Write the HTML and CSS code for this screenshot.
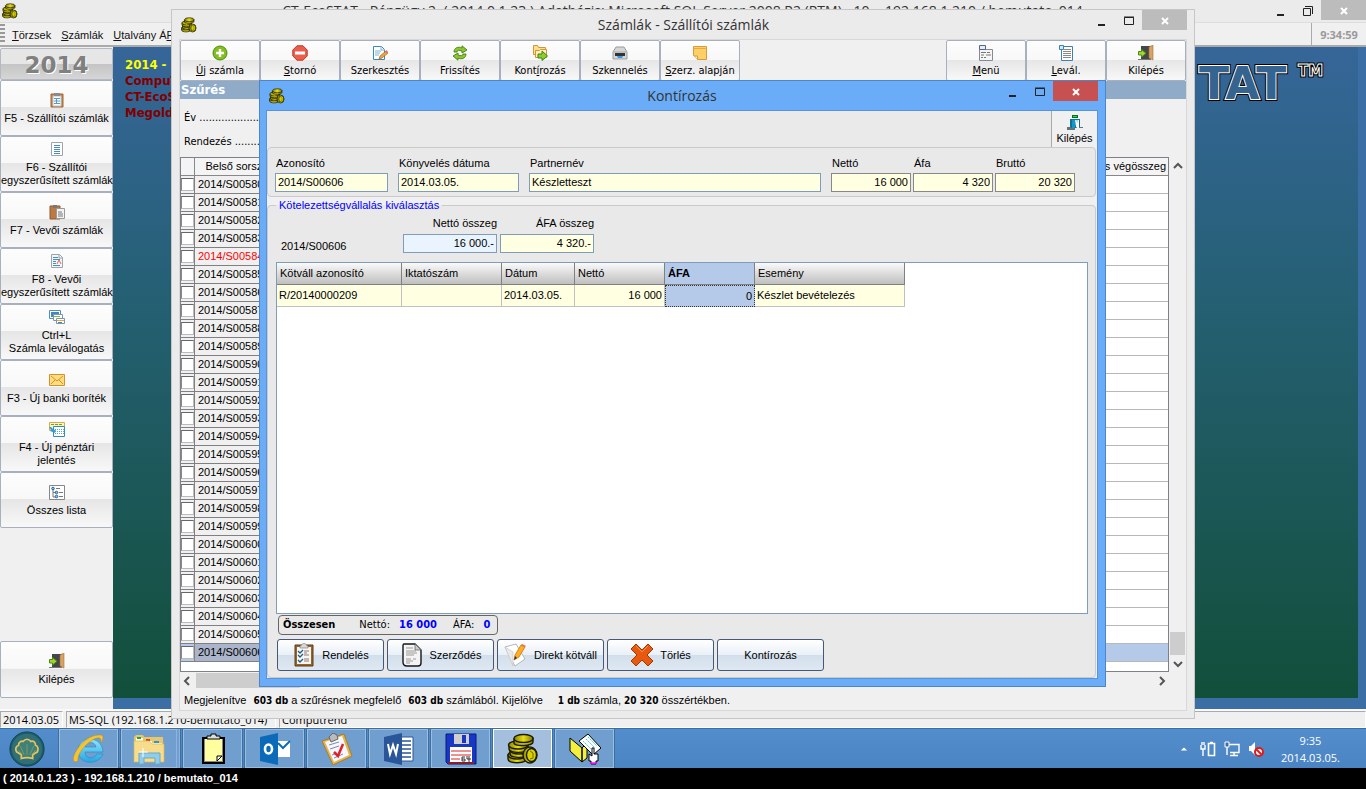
FILE: index.html
```html
<!DOCTYPE html>
<html lang="hu">
<head>
<meta charset="utf-8">
<title>CT-EcoSTAT</title>
<link rel="stylesheet" href="styles.css">
</head>
<body>
<svg width="0" height="0" class="defs" aria-hidden="true">
  <defs>
    <linearGradient id="gold" x1="0" x2="1"><stop offset="0" stop-color="#8a8200"/><stop offset=".5" stop-color="#e6de18"/><stop offset="1" stop-color="#807800"/></linearGradient>
    <linearGradient id="ie" x1="0" y1="0" x2="0" y2="1"><stop offset="0" stop-color="#8fe4fb"/><stop offset="1" stop-color="#27a5e2"/></linearGradient>
    <symbol id="coins" viewBox="0 0 32 32">
      <g fill="url(#gold)" stroke="#1c1a00" stroke-width="1.400">
        <path d="M1 22v4c0 5 18 5 18 0v-4z"/><ellipse cx="10" cy="22" rx="9" ry="4"/>
        <path d="M3 17v4c0 5 18 4 18 0v-4z"/><ellipse cx="12" cy="17" rx="9" ry="4"/>
        <path d="M2 12v4c0 5 19 4 19 0v-4z"/><ellipse cx="11" cy="12" rx="9.500" ry="4"/>
        <path d="M7 6v4c0 4 19 3 19-1V5z"/><ellipse cx="16.500" cy="5.500" rx="9.500" ry="4"/>
        <ellipse cx="23" cy="22" rx="7" ry="8"/><ellipse cx="24.500" cy="22" rx="5" ry="6.500" fill="#d8d000"/>
      </g>
      <path d="M23 18l3 2v5l-3 1" fill="none" stroke="#6e6800"/>
    </symbol>
    <symbol id="clip" viewBox="0 0 16 16"><path d="M2 2h12v13H2z" fill="#c98a52" stroke="#9c6434"/><path d="M4 4h8v10H4z" fill="#fff" stroke="#b9c4cc"/><path d="M5 1h6v3H5z" fill="#8b8b8b"/><path d="M5 6.500h6M5 9h6M5 11.500h6M7.500 6v6" stroke="#5a9bc4"/></symbol>
    <symbol id="doc" viewBox="0 0 16 16"><path d="M2.500 1.500h11v13h-11z" fill="#fff" stroke="#9aa5ac"/><path d="M5 4.500h6M5 6.500h6M5 8.500h6M5 10.500h6M5 12.500h6" stroke="#4a8cbd"/></symbol>
    <symbol id="paste" viewBox="0 0 16 16"><path d="M1 2h10v13H1z" fill="#b97a45" stroke="#915b2c"/><path d="M4 1h4v3H4z" fill="#777"/><path d="M7.500 4.500h8v10h-8z" fill="#f3f3f3" stroke="#999"/><path d="M9 8h4M9 10h5M9 12h5" stroke="#777"/></symbol>
    <symbol id="docr" viewBox="0 0 16 16"><path d="M2.500 1.500h8l3 3v10h-11z" fill="#f4f5f6" stroke="#9aa5ac"/><path d="M10 1v4h4" fill="none" stroke="#9aa5ac"/><path d="M4 4.500h5M4 6.500h7M4 8.500h3M4 10.500h3M4 12.500h7" stroke="#4a8cbd"/><path d="M8 11l2-4 2 4" stroke="#d96c5f" fill="none"/></symbol>
    <symbol id="wins" viewBox="0 0 16 16"><path d="M.5 1.500h11v8H.5z" fill="#fff" stroke="#4c8fc6"/><path d="M2 3h8v5H2z" fill="#4187be"/><path d="M4.500 5.500h9v6h-9z" fill="#fff" stroke="#7d97a8"/><path d="M7.500 9.500h8v5h-8z" fill="#fff" stroke="#7d97a8"/><path d="M5 7.500h6" stroke="#7db548"/><path d="M8 11.500h7" stroke="#eda338"/><path d="M9 13.500h4" stroke="#4187be"/></symbol>
    <symbol id="mail" viewBox="0 0 16 16"><path d="M.5 2.500h15v11H.5z" fill="#ffdc7c" stroke="#d19231"/><path d="M2 4l6 5 6-5M2 12l4-4M14 12l-4-4" fill="none" stroke="#d19231"/></symbol>
    <symbol id="cal" viewBox="0 0 16 16"><path d="M.5 1.500h15v8H.5z" fill="#fff3b6" stroke="#d2ab52"/><path d="M2 3.500h12" stroke="#6a9d45" stroke-dasharray="3 1"/><path d="M4.500 5.500h11v10h-11z" fill="#fff" stroke="#348abc"/><path d="M6 8.500h9M6 10.500h9M6 12.500h9" stroke="#5aa7d1" stroke-dasharray="1 1"/><path d="M0 6l2 3-1 1 5 2 1-4-2 1-3-3z" fill="#3a9bd4"/></symbol>
    <symbol id="tree" viewBox="0 0 16 16"><path d="M.5 1.500h15v14H.5z" fill="#fff" stroke="#888"/><path d="M4 5v8h3M4 8.500h3M7 4.500h4M10 8.500h4M10 12.500h4" fill="none" stroke="#777"/><g fill="#8ec1e6" stroke="#24669a"><circle cx="4" cy="4.500" r="1.300"/><circle cx="7.500" cy="8.500" r="1.300"/><circle cx="7.500" cy="12.500" r="1.300"/></g></symbol>
    <symbol id="door" viewBox="0 0 16 16"><path d="M3 1h11v13H3z" fill="#44474a"/><path d="M11 2l4-2v15l-4-2z" fill="#d8a365" stroke="#a4713b" stroke-width=".6"/><path d="M0 14h13v1H0z" fill="#777"/><path d="M.5 6.500h3V4.500L8 8.300l-4.500 3.800V10h-3z" fill="#a3d62a" stroke="#4b8a12"/></symbol>
    <symbol id="plus" viewBox="0 0 16 16"><circle cx="8" cy="8" r="7" fill="#83c01f" stroke="#4e8b10"/><path d="M8 4v8M4 8h8" stroke="#fff" stroke-width="2.400"/></symbol>
    <symbol id="minus" viewBox="0 0 16 16"><path d="M5 .8h6L15.200 5v6L11 15.200H5L.8 11V5z" fill="#ec5d4b" stroke="#b83a2c"/><path d="M3 6.500h10v3H3z" fill="#fff"/></symbol>
    <symbol id="edit" viewBox="0 0 16 16"><path d="M1.500 1.500h8l3 3v10h-11z" fill="#fff" stroke="#3888bb"/><path d="M9 1v4h4M3 6h6M3 8h5M3 10h4" fill="none" stroke="#7ab2d4"/><path d="M7 14l1-3 6-5 2 2-6 5z" fill="#f2a33a" stroke="#a66421" stroke-width=".7"/><path d="M13 7l1.500-2L16 7l-1 1z" fill="#e66"/></symbol>
    <symbol id="fresh" viewBox="0 0 16 16"><g fill="#8dc72b" stroke="#427f12" stroke-width=".9"><path d="M2 7c0-4 4-6 8-4V.800L15 5l-5 3V6C7 5 5 5 5 7z"/><path d="M14 9c0 4-4 6-8 4v2.200L1 11l5-3v2c3 1 5 1 5-1z"/></g></symbol>
    <symbol id="fold" viewBox="0 0 16 16"><path d="M1.500 9.500v-9h4l1 2h7v7z" fill="#ffdf87" stroke="#d3953a"/><path d="M3.500 12.500v-7h4l1-1h6v8z" fill="#fff0bc" stroke="#d3953a"/><path d="M6 9h4V6l5.500 5-5.500 4.500V13H6z" fill="#91cb30" stroke="#3d8414"/></symbol>
    <symbol id="scan" viewBox="0 0 16 16"><path d="M4 2h8l3 5v7H1V7z" fill="#d3d5d7" stroke="#9a9d9f"/><path d="M2 7h12" stroke="#aaa"/><path d="M3 8h10v3H3z" fill="#333"/><path d="M5 11h6l-1 2H6z" fill="#3b96e6"/></symbol>
    <symbol id="note" viewBox="0 0 16 16"><path d="M1.500 1.500h13v13h-9l-4-4z" fill="#fcd066" stroke="#d49a3c"/><path d="M1.500 3.500h13" stroke="#e7a845"/><path d="M2 11h3.500v3.500" fill="#fff0b8" stroke="#d49a3c"/></symbol>
    <symbol id="menu" viewBox="0 0 16 16"><path d="M1.500 4.500h13v11h-13z" fill="#f5f5f5" stroke="#858b96"/><path d="M1.500.5h6v4h-6z" fill="#e5edf7" stroke="#52698c"/><path d="M3 7.500h5M9 7.500h3M3 10h3M8 10h5M3 12.500h2M6 12.500h2" stroke="#777"/></symbol>
    <symbol id="list" viewBox="0 0 16 16"><path d="M3.500 1.500h11v14h-11z" fill="#fff" stroke="#3d80b2"/><path d="M1.500.5h4v4h-4z" fill="#d5eafa" stroke="#3d80b2"/><path d="M6 4.500h7M5 6.500h8M5 8.500h8M5 10.500h8M5 12.500h8" stroke="#888"/></symbol>
    <symbol id="exit" viewBox="0 0 16 16"><path d="M5 0h6v3H5z" fill="#0b6a24"/><path d="M6 1h4v1H6z" fill="#23e034"/><path d="M3 4h10v9H3z" fill="#0c7296"/><path d="M5 5h3v8H5z" fill="#1497c8"/><path d="M8 5h4v9l-3-2z" fill="#fff"/><path d="M8 5h3v3z" fill="#a9d8ff"/><path d="M0 12h4v1h4v2H0zM12 12h4v1h-4z" fill="#60747c"/></symbol>
    <symbol id="order" viewBox="0 0 24 24"><path d="M3 2h18v21H3z" fill="#966529" stroke="#5d3c14"/><path d="M5 4h14v17H5z" fill="#f5f5f5"/><path d="M8 3c2 0 2-3 4-3s2 3 4 3v2H8z" fill="#d8d8d8" stroke="#777" stroke-width=".6"/><path d="M12 8h5M12 12h5M12 16h5M12 18h5M12 10h3" stroke="#9a7770"/><path d="M6 8l2 2 3-3M6 12l2 2 3-3M6 17l2 2 3-3" fill="none" stroke="#205c88" stroke-width="1.300"/></symbol>
    <symbol id="contract" viewBox="0 0 24 24"><path d="M4 1h11l6 6v13q0 3-3 3H7q-4 0-4-4V3q0-2 1-2z" fill="#f4f4f4" stroke="#161616" stroke-width="1.400"/><path d="M15 1v6h6" fill="#ccc" stroke="#555" stroke-width=".7"/><path d="M6 5h7M6 8h10M6 10h11M6 12h8M6 16h5M13 16h3M6 18h7M6 20h4" stroke="#999"/></symbol>
    <symbol id="write" viewBox="0 0 24 24"><path d="M1 4l11-3 9 15-10 7z" fill="#fff" stroke="#b7b7b7"/><path d="M9 23L1 4l8 5z" fill="#e9e9e9" stroke="#c6c6c6" stroke-width=".7"/><path d="M10 17l1-5 6-10 4 2-6 10z" fill="#ffaf20" stroke="#bd6c10" stroke-width=".7"/><path d="M10 17l1-4 2 2z" fill="#333"/><path d="M17 2l1-1 4 2-1 1z" fill="#e06a4a"/></symbol>
    <symbol id="del" viewBox="0 0 24 24"><path d="M6 1l6 6 6-6 5 5-6 6 6 6-5 5-6-6-6 6-5-5 6-6-6-6z" fill="#e9580f" stroke="#a23707" stroke-linejoin="round"/><path d="M6 3l6 6 6-6" fill="none" stroke="#f69255"/></symbol>
    <symbol id="shell" viewBox="0 0 40 40"><circle cx="20" cy="20" r="18" fill="#1c5c68" stroke="#164153"/><circle cx="20" cy="20" r="16" fill="#2f6f78"/><path d="M14 30v-4l-5-3c-2-4 0-6 2-7 0-3 3-5 5-4 2-3 6-3 8 0 3-1 5 1 5 4 3 1 3 4 2 7l-5 3v4q-6-2-12 0z" fill="#3f8078" stroke="#e5c45d" stroke-width="1.800"/><path d="M20 26V15M17 26l-4-9M23 26l4-9M15 26l-4-5M25 26l4-5" stroke="#7f9a66"/></symbol>
    <symbol id="ieicon" viewBox="0 0 32 32"><path d="M24 21h6C26 32 6 33 5 18 4 3 29 1 30 19H12c0 8 10 7 12 2zM12 14h11c-1-6-10-6-11 0z" fill="url(#ie)" stroke="#2787be" stroke-width=".6"/><path d="M5 28C-8 34 8 0 28 2c4 1 1 7 0 8 1-7-4-6-10-2C9 14 4 23 5 28z" fill="#f7c431" stroke="#bd8b1a" stroke-width=".5"/></symbol>
    <symbol id="explorer" viewBox="0 0 32 32"><path d="M1 4l2-2h7l1 2h19l1 25H1z" fill="#e9c768"/><path d="M3 5h7v3h9v2h10v4H3z" fill="#fbfbf0"/><path d="M4 4h4v2H4z" fill="#20a545"/><path d="M13 6h4v2h-4z" fill="#d3472c"/><path d="M21 8h5v2h-5z" fill="#2c94cf"/><path d="M1 8h15l3 3h12v18H1z" fill="#f7dc8c" stroke="#d9b65a" stroke-width=".7"/><path d="M6 31V20h21v11h-5v-6H11v6z" fill="#8fcdea" stroke="#6ba9c6"/><path d="M10 15v9M6 19h9" stroke="#fff"/></symbol>
    <symbol id="clipy" viewBox="0 0 32 32"><path d="M6 5h21v25H6z" fill="#888" stroke="#000" stroke-width="2"/><path d="M8 6h17v22H8z" fill="#ffffa0"/><path d="M20 28v-5h5z" fill="#fff" stroke="#000"/><path d="M10 6V3h4V1h5v2h4v3z" fill="#ddd" stroke="#000"/></symbol>
    <symbol id="outlook" viewBox="0 0 32 32"><path d="M1 4l18-4v32L1 28z" fill="#0b6bb9"/><path d="M19 8h12v16H19z" fill="#fff"/><path d="M19 10l5 5 7-7" fill="none" stroke="#0b6bb9" stroke-width="2"/><ellipse cx="9.500" cy="16" rx="3.500" ry="4.500" fill="none" stroke="#fff" stroke-width="2.600"/></symbol>
    <symbol id="check" viewBox="0 0 32 32"><path d="M1 8L23 1l8 22-19 9z" fill="#e2b64e" stroke="#b07b24"/><path d="M4 9l17-6 7 19-15 7z" fill="#f4f7ff"/><path d="M8 4l4-4 4 2 1 4-7 3z" fill="#bbb" stroke="#666"/><path d="M8 12l10-3M9 16l9-3M11 22l5-2M13 25l9-4" stroke="#7d89a8"/><path d="M13 19l4 4 5-12" fill="none" stroke="#e3202a" stroke-width="2.500"/></symbol>
    <symbol id="word" viewBox="0 0 32 32"><path d="M17 4h13v24H17z" fill="#fff" stroke="#2a5699"/><path d="M19 8h9M19 12h9M19 16h9M19 20h9M19 24h9" stroke="#2a5699" stroke-width="1.600"/><path d="M1 4l18-4v32L1 28z" fill="#2a5699"/><path d="M5 11l2 10 3-9 3 9 2-10" fill="none" stroke="#fff" stroke-width="2"/></symbol>
    <symbol id="disk" viewBox="0 0 32 32"><path d="M1 1h30v30H3l-2-2z" fill="#1737c4" stroke="#0a1d78"/><path d="M9 1h15v10H9z" fill="#cfcfcf"/><path d="M17 2h4v8h-4z" fill="#1737c4"/><path d="M5 14h22v15H5z" fill="#fff"/><path d="M6 18h20M6 22h20M6 26h9" stroke="#d22"/><path d="M20 24h-3v4h3v-2h-3M22 23v3h4M24 23v6" fill="none" stroke="#333"/><path d="M3 30h26" stroke="#8f1a2a" stroke-width="2"/></symbol>
    <symbol id="hand" viewBox="0 0 32 32"><path d="M1 5l12 10v14L1 18zM13 15l5-5v15l-5 4z" fill="#f4ef3c" stroke="#000"/><path d="M10 8l9-7 13 14-8 7z" fill="#fff" stroke="#000"/><path d="M14 8l8 8M17 6l9 9M19 4l9 9" stroke="#32cfd8" stroke-dasharray="2 1"/><path d="M20 28v-7l3 2v-8h2v6h4v7h-2v3h-5v-3z" fill="#fff" stroke="#000"/><path d="M21 30h7" stroke="#f0f" stroke-width="1.500"/></symbol>
  </defs>
</svg>

<div class="screen">
  <main class="app">
    <header class="app-title">
      <svg class="i16"><use href="#coins"/></svg>
      <h1>CT-EcoSTAT - Pénzügy 2. ( 2014.0.1.23 ) Adatbázis: Microsoft SQL Server 2008 R2 (RTM) - 10. - 192.168.1.210 / bemutato_014</h1>
      <div class="winbtns"><button aria-label="Kis méret"><svg viewBox="0 0 12 12"><path d="M2 9h7v2H2z"/></svg></button><button aria-label="Előző méret"><svg viewBox="0 0 12 12"><path d="M1.500 3.500h7v7h-7zM3 1.500h7.500V9" class="ln"/></svg></button><button class="x" aria-label="Bezárás"><svg viewBox="0 0 12 12"><path d="M3 3l6 6M9 3l-6 6" class="xx"/></svg></button></div>
    </header>
    <nav class="menubar"><span class="grip"></span><a href="#"><u>T</u>örzsek</a><a href="#"><u>S</u>zámlák</a><a href="#"><u>U</u>talvány</a><a href="#">Á<u>F</u>A</a><time>9:34:59</time></nav>
    <div class="work">
      <aside class="side">
        <div class="year">2014</div>
        <button class="big"><svg class="i16"><use href="#clip"/></svg>F5 - Szállítói számlák</button>
        <button class="big"><svg class="i16"><use href="#doc"/></svg>F6 - Szállítói<br>egyszerűsített számlák</button>
        <button class="big"><svg class="i16"><use href="#paste"/></svg>F7 - Vevői számlák</button>
        <button class="big"><svg class="i16"><use href="#docr"/></svg>F8 - Vevői<br>egyszerűsített számlák</button>
        <button class="big"><svg class="i16"><use href="#wins"/></svg>Ctrl+L<br>Számla leválogatás</button>
        <button class="big"><svg class="i16"><use href="#mail"/></svg>F3 - Új banki boríték</button>
        <button class="big"><svg class="i16"><use href="#cal"/></svg>F4 - Új pénztári<br>jelentés</button>
        <button class="big"><svg class="i16"><use href="#tree"/></svg>Összes lista</button>
        <button class="big last"><svg class="i16"><use href="#door"/></svg>Kilépés</button>
      </aside>
      <section class="canvas">
        <p class="info"><em>2014 - bemutató</em><br>CompuTrend<br>CT-EcoSTAT<br>Megoldások</p>
        <svg class="logo" viewBox="0 0 136 50" aria-label="TAT"><g class="l1"><text x="3" y="39">TAT</text><text x="102" y="16" class="tm">TM</text></g><g class="l2"><text x="3" y="39">TAT</text><text x="102" y="16" class="tm">TM</text></g><g class="l3"><text x="3" y="39">TAT</text></g></svg>
      </section>
    </div>
    <footer class="status"><span class="s1">2014.03.05</span><span class="s2">MS-SQL (192.168.1.210-bemutato_014)</span><span class="s3">Computrend</span></footer>
  </main>

  <section class="win child">
    <header class="win-title"><svg class="i16"><use href="#coins"/></svg><h2>Számlák - Szállítói számlák</h2>
      <div class="winbtns"><button aria-label="Kis méret"><svg viewBox="0 0 12 12"><path d="M2 9h7v2H2z"/></svg></button><button aria-label="Teljes méret"><svg viewBox="0 0 12 12"><path d="M1.500 2.500h9v7h-9zM1 2h10" class="ln"/></svg></button><button class="x" aria-label="Bezárás"><svg viewBox="0 0 12 12"><path d="M3 3l6 6M9 3l-6 6" class="xx"/></svg></button></div></header>
    <div class="child-body">
      <div class="tools">
        <button><svg class="i16"><use href="#plus"/></svg><span><u>Ú</u>j számla</span></button>
        <button><svg class="i16"><use href="#minus"/></svg><span><u>S</u>tornó</span></button>
        <button><svg class="i16"><use href="#edit"/></svg><span>Szerkesztés</span></button>
        <button><svg class="i16"><use href="#fresh"/></svg><span>Frissítés</span></button>
        <button><svg class="i16"><use href="#fold"/></svg><span>Kont<u>í</u>rozás</span></button>
        <button><svg class="i16"><use href="#scan"/></svg><span>Szkennelés</span></button>
        <button><svg class="i16"><use href="#note"/></svg><span><u>S</u>zerz. alapján</span></button>
        <button class="push"><svg class="i16"><use href="#menu"/></svg><span><u>M</u>enü</span></button>
        <button><svg class="i16"><use href="#list"/></svg><span><u>L</u>evál.</span></button>
        <button><svg class="i16"><use href="#door"/></svg><span>Kilépés</span></button>
      </div>
      <h3 class="filter">Szűrés</h3>
      <div class="conds"><p>Év .....................</p><p>Rendezés .........</p></div>
      <div class="gridwrap">
        <div class="gridbox">
          <table class="inv">
            <thead><tr><th class="c"></th><th class="id">Belső sorszám</th><th></th><th class="sum">Áfás végösszeg</th></tr></thead>
            <tbody>
            <tr><td><input type="checkbox" aria-label="580"></td><td>2014/S00580</td><td></td><td></td></tr>
            <tr><td><input type="checkbox" aria-label="581"></td><td>2014/S00581</td><td></td><td></td></tr>
            <tr><td><input type="checkbox" aria-label="582"></td><td>2014/S00582</td><td></td><td></td></tr>
            <tr><td><input type="checkbox" aria-label="583"></td><td>2014/S00583</td><td></td><td></td></tr>
            <tr class="red"><td><input type="checkbox" aria-label="584"></td><td>2014/S00584</td><td></td><td></td></tr>
            <tr><td><input type="checkbox" aria-label="585"></td><td>2014/S00585</td><td></td><td></td></tr>
            <tr><td><input type="checkbox" aria-label="586"></td><td>2014/S00586</td><td></td><td></td></tr>
            <tr><td><input type="checkbox" aria-label="587"></td><td>2014/S00587</td><td></td><td></td></tr>
            <tr><td><input type="checkbox" aria-label="588"></td><td>2014/S00588</td><td></td><td></td></tr>
            <tr><td><input type="checkbox" aria-label="589"></td><td>2014/S00589</td><td></td><td></td></tr>
            <tr><td><input type="checkbox" aria-label="590"></td><td>2014/S00590</td><td></td><td></td></tr>
            <tr><td><input type="checkbox" aria-label="591"></td><td>2014/S00591</td><td></td><td></td></tr>
            <tr><td><input type="checkbox" aria-label="592"></td><td>2014/S00592</td><td></td><td></td></tr>
            <tr><td><input type="checkbox" aria-label="593"></td><td>2014/S00593</td><td></td><td></td></tr>
            <tr><td><input type="checkbox" aria-label="594"></td><td>2014/S00594</td><td></td><td></td></tr>
            <tr><td><input type="checkbox" aria-label="595"></td><td>2014/S00595</td><td></td><td></td></tr>
            <tr><td><input type="checkbox" aria-label="596"></td><td>2014/S00596</td><td></td><td></td></tr>
            <tr><td><input type="checkbox" aria-label="597"></td><td>2014/S00597</td><td></td><td></td></tr>
            <tr><td><input type="checkbox" aria-label="598"></td><td>2014/S00598</td><td></td><td></td></tr>
            <tr><td><input type="checkbox" aria-label="599"></td><td>2014/S00599</td><td></td><td></td></tr>
            <tr><td><input type="checkbox" aria-label="600"></td><td>2014/S00600</td><td></td><td></td></tr>
            <tr><td><input type="checkbox" aria-label="601"></td><td>2014/S00601</td><td></td><td></td></tr>
            <tr><td><input type="checkbox" aria-label="602"></td><td>2014/S00602</td><td></td><td></td></tr>
            <tr><td><input type="checkbox" aria-label="603"></td><td>2014/S00603</td><td></td><td></td></tr>
            <tr><td><input type="checkbox" aria-label="604"></td><td>2014/S00604</td><td></td><td></td></tr>
            <tr><td><input type="checkbox" aria-label="605"></td><td>2014/S00605</td><td></td><td></td></tr>
            <tr class="sel"><td><input type="checkbox" aria-label="606"></td><td>2014/S00606</td><td></td><td></td></tr>
            </tbody>
          </table>
        </div>
        <div class="vbar"><svg viewBox="0 0 10 8"><path d="M1 6l4-4 4 4"/></svg><span class="thumb"></span><svg viewBox="0 0 10 8"><path d="M1 2l4 4 4-4"/></svg></div>
      </div>
      <div class="hbar"><svg viewBox="0 0 8 10"><path d="M6 1L2 5l4 4"/></svg><span class="thumb"></span><svg viewBox="0 0 8 10"><path d="M2 1l4 4-4 4"/></svg></div>
      <p class="summary"><span>Megjelenítve</span><span><b>603 db</b> a szűrésnek megfelelő</span><span><b>603 db</b> számlából. Kijelölve</span><span class="one"><b>1 db</b> számla, <b>20 320</b> összértékben.</span></p>
    </div>
  </section>

  <section class="win dialog" role="dialog" aria-labelledby="dlg">
    <header class="win-title"><svg class="i16"><use href="#coins"/></svg><h2 id="dlg">Kontírozás</h2>
      <div class="winbtns"><button aria-label="Kis méret"><svg viewBox="0 0 12 12"><path d="M2 9h7v2H2z"/></svg></button><button aria-label="Teljes méret"><svg viewBox="0 0 12 12"><path d="M1.500 2.500h9v7h-9zM1 2h10" class="ln"/></svg></button><button class="x" aria-label="Bezárás"><svg viewBox="0 0 12 12"><path d="M3 3l6 6M9 3l-6 6" class="xx"/></svg></button></div></header>
    <div class="dlg-body">
      <div class="strip"><button><svg class="i16"><use href="#exit"/></svg>Kilépés</button></div>
      <div class="panel">
        <label class="f w1">Azonosító<input value="2014/S00606"></label>
        <label class="f w2">Könyvelés dátuma<input value="2014.03.05."></label>
        <label class="f grow">Partnernév<input value="Készletteszt"></label>
        <div class="nums"><label class="f w3">Nettó<input value="16 000"></label><label class="f w3">Áfa<input value="4 320"></label><label class="f w3">Bruttó<input value="20 320"></label></div>
      </div>
      <fieldset class="commit">
        <legend>Kötelezettségvállalás kiválasztás</legend>
        <div class="sums"><span class="ref">2014/S00606</span><label>Nettó összeg<input class="blue" value="16 000.-"></label><label>ÁFA összeg<input value="4 320.-"></label></div>
        <div class="list">
          <table>
            <thead><tr><th class="k1">Kötváll azonosító</th><th class="k2">Iktatószám</th><th class="k3">Dátum</th><th class="k4">Nettó</th><th class="k4 act">ÁFA</th><th class="k5">Esemény</th></tr></thead>
            <tbody><tr><td>R/20140000209</td><td></td><td>2014.03.05.</td><td class="r">16 000</td><td class="r cur">0</td><td>Készlet bevételezés</td></tr></tbody>
          </table>
        </div>
        <div class="total"><b>Összesen</b><span>Nettó: <strong>16 000</strong></span><span>ÁFA: <strong>0</strong></span></div>
        <div class="acts">
          <button><svg class="i24"><use href="#order"/></svg>Rendelés</button>
          <button><svg class="i24"><use href="#contract"/></svg>Szerződés</button>
          <button><svg class="i24"><use href="#write"/></svg>Direkt kötváll</button>
          <button><svg class="i24"><use href="#del"/></svg>Törlés</button>
          <button>Kontírozás</button>
        </div>
      </fieldset>
    </div>
  </section>

  <nav class="taskbar">
    <button class="start" aria-label="Start"><svg><use href="#shell"/></svg></button>
    <button aria-label="Internet Explorer"><svg><use href="#ieicon"/></svg></button>
    <button class="stack" aria-label="Fájlkezelő"><svg><use href="#explorer"/></svg></button>
    <button aria-label="Vágólap"><svg><use href="#clipy"/></svg></button>
    <button aria-label="Outlook"><svg><use href="#outlook"/></svg></button>
    <button aria-label="Feladatok"><svg><use href="#check"/></svg></button>
    <button aria-label="Word"><svg><use href="#word"/></svg></button>
    <button aria-label="Mentés"><svg><use href="#disk"/></svg></button>
    <button class="on" aria-label="CT-EcoSTAT"><svg><use href="#coins"/></svg></button>
    <button aria-label="Iratok"><svg><use href="#hand"/></svg></button>
    <div class="tray">
      <svg class="up" viewBox="0 0 10 6"><path d="M1 5l4-4 4 4z" fill="#fff"/></svg>
      <svg class="i16" viewBox="0 0 16 16"><path d="M1 4v4h4V4M2 1v3M4 1v3M3 8v7" fill="none" stroke="#fff" stroke-width="1.400"/><path d="M8.500 2.500h6v12h-6zM10 1.500h3" fill="none" stroke="#fff" stroke-width="1.600"/></svg>
      <svg class="i16" viewBox="0 0 16 16"><path d="M5 3.500h10v8H6M10 12v2M6 14.500h8M3 6v8" fill="none" stroke="#fff" stroke-width="1.400"/><path d="M1 1h4v5H1z" fill="#3a6ea5" stroke="#fff"/></svg>
      <svg class="i16" viewBox="0 0 16 16"><path d="M1 5h2l4-4v13l-4-4H1z" fill="#fff"/><circle cx="11" cy="11" r="4" fill="#fff" stroke="#e01b1b" stroke-width="2"/><path d="M8 8l6 6" stroke="#e01b1b" stroke-width="2"/></svg>
      <time>9:35<br>2014.03.05.</time>
    </div>
  </nav>
  <footer class="caption">( 2014.0.1.23 ) - 192.168.1.210 / bemutato_014</footer>
</div>
</body>
</html>
```
FILE: styles.css
```css
* { box-sizing: border-box; }
body { margin: 0; font: 11px/13px "Liberation Sans", Arial, sans-serif; color: #000; background: #000; }
button, input { font: inherit; color: inherit; margin: 0; }
button { padding: 0; }
h1, h2, h3, p { margin: 0; }
.defs { position: absolute; }
.i16 { width: 16px; height: 16px; flex: none; }
.i24 { width: 24px; height: 24px; flex: none; }
.screen { position: relative; height: 100vh; min-height: 789px; display: flex; flex-direction: column; overflow: hidden; }

/* main application window */
.app { flex: 1; min-height: 0; display: flex; flex-direction: column; background: #f0f0f0; }
.app-title { height: 22px; display: flex; align-items: center; background: #ebebeb; padding-left: 2px; }
.app-title h1, .win-title h2 { flex: 1; text-align: center; font: 14px/20px "Open Sans", "Noto Sans", sans-serif; color: #333; white-space: nowrap; }
.app-title h1 { padding-left: 80px; }
.winbtns { display: flex; align-self: flex-start; }
.winbtns button { width: 27px; height: 20px; border: 0; background: none; }
.winbtns svg { width: 12px; height: 12px; fill: #222; vertical-align: middle; }
.winbtns .ln { fill: none; stroke: #222; }
.winbtns .xx { stroke: #fff; stroke-width: 2; }
.winbtns .x { width: 45px; background: #bcbcbc; }
.menubar { height: 25px; display: flex; align-items: center; gap: 10px; border-top: 1px solid #ddd; border-bottom: 2px solid #aaa; }
.menubar a { color: #111; text-decoration: none; padding-top: 2px; }
.grip { width: 5px; height: 20px; margin-right: -3px; background: repeating-linear-gradient(#999 0 2px, #f0f0f0 2px 4px); }
.menubar a:last-of-type { margin-left: -7px; }
.menubar time { margin-left: auto; align-self: stretch; width: 55px; padding-top: 5px; text-align: center; border-left: 1px solid #aaa; font-weight: bold; color: #9a9a9a; font-family: "Noto Sans", sans-serif; }
.work { flex: 1; min-height: 0; display: flex; }
.side { width: 113px; display: flex; flex-direction: column; padding: 1px 0 11px; }
.year { height: 32px; text-align: center; font: bold 23px/32px "DejaVu Sans", sans-serif; color: #808080; text-shadow: 1px 1px #fff; background: linear-gradient(#e6e6e6 50%, #c4c4c4 50%, #d6d6d6); border: 1px solid #b4b9c4; border-radius: 2px; }
.big, .tools button { display: flex; flex-direction: column; align-items: center; justify-content: center; border: 1px solid #a8b0c0; border-radius: 2px; background: linear-gradient(#fdfdfd 0, #f8f8f8 48%, #e6e6e6 49%, #f8f8f8); }
.big { height: 56px; gap: 4px; white-space: nowrap; }
.big:has(br) { display: block; }
.big:has(br) svg { display: block; margin: 0 auto 4px; }
.big.last { margin-top: auto; height: 57px; }
.canvas { flex: 1; position: relative; border: solid #3a6ea5; border-width: 0 8px 11px 0; background: linear-gradient(#366699, #245f72 40%, #124f3a); }
.info { padding: 10px 0 0 12px; font: bold 13px/16px "DejaVu Sans Condensed", sans-serif; color: #800000; }
.info em { color: #ff0; font-style: normal; }
.logo { position: absolute; right: 26px; top: 13px; width: 136px; height: 50px; font: bold 44px "DejaVu Sans", sans-serif; fill: none; stroke-linejoin: miter; }
.logo .tm { font-size: 15px; }
.l1 { stroke: #000; stroke-width: 4px; }
.l2 { stroke: #fff; stroke-width: 2px; }
.l3 { fill: #34648f; }
.logo .l1 .tm { stroke-width: 3px; }
.logo .l2 .tm { stroke-width: 1px; fill: #000; }
.status { height: 19px; display: flex; gap: 3px; border-top: 2px solid #fafafa; font: 11px/15px "Open Sans", sans-serif; background: #f0f0f0; }
.status span { border: 1px solid #aaa; border-right-color: #fff; border-bottom-color: #fff; padding: 0 2px; white-space: nowrap; }
.s1 { width: 63px; }
.s2 { width: 210px; }
.s3 { flex: 1; }

/* floating windows */
.win { position: absolute; display: flex; flex-direction: column; }
.child { inset: 9px 171px 70px 171px; background: #ebebeb; border: 1px solid #c6c6c6; padding: 0 7px 7px; }
.win-title { height: 29px; display: flex; align-items: center; flex: none; padding-left: 2px; }
.child .win-title h2 { padding-left: 82px; }
.child-body { flex: 1; min-height: 0; display: flex; flex-direction: column; background: #f0f0f0; border: 1px solid #d8d8d8; }
.tools { display: flex; height: 41px; flex: none; font: 11px/13px "DejaVu Sans Condensed", sans-serif; }
.tools button { width: 80px; gap: 3px; white-space: nowrap; }
.push { margin-left: auto; }
.filter { background: #8fabc8; color: #fff; font: bold 13px/18px "DejaVu Sans Condensed", sans-serif; padding-left: 1px; }
.conds { height: 58px; padding: 7px 4px 0; font: 11px/24px "DejaVu Sans Condensed", sans-serif; }
.gridwrap { display: flex; flex: 1; min-height: 0; }
.gridbox { flex: 1; border: 1px solid #808088; background: #fff; overflow: hidden; }
.inv { width: 100%; table-layout: fixed; border-collapse: separate; border-spacing: 0; }
.inv th { height: 18px; padding: 0 2px; background: #f4f4f4; font-weight: normal; border: solid #888; border-width: 0 1px 1px 0; white-space: nowrap; }
.inv .c { width: 14px; }
.inv .id { width: 94px; }
.inv .sum { width: 90px; text-align: right; border-right: 0; }
.inv td { height: 18px; padding: 0 3px; border-bottom: 1px solid #b8b8b8; }
.inv td:nth-child(-n+2) { background: #f0f0f0; border-bottom-color: #808080; border-right: 1px solid #808080; }
.inv td:first-child { padding: 0; }
.inv input { appearance: none; display: block; width: 13px; height: 13px; background: #fff; border: 1px solid #bbb; border-top-color: #666; border-left-color: #888; }
.inv .red td { color: #f00; }
.inv .sel td { background: #b5c9e9; }
.inv .sel td:nth-child(2) { background: #aab5cb; }
.vbar { width: 17px; display: flex; flex-direction: column; align-items: center; padding: 5px 0 4px; }
.vbar svg { width: 10px; height: 8px; }
.vbar .thumb { margin-top: auto; margin-bottom: 5px; width: 15px; height: 23px; background: #cdcdcd; }
.vbar path, .hbar path { fill: none; stroke: #555; stroke-width: 2; }
.hbar { display: flex; align-items: center; height: 17px; flex: none; padding: 0 20px 0 3px; gap: 5px; }
.hbar svg { width: 8px; height: 10px; }
.hbar .thumb { width: 104px; height: 15px; background: #cdcdcd; margin-right: auto; }
.summary { flex: none; height: 21px; padding: 4px 4px 3px; display: flex; gap: 7px; line-height: 14px; white-space: nowrap; }
.summary b { font-family: "DejaVu Sans Condensed", sans-serif; font-size: 10px; }
.summary .one { padding-left: 8px; }

.dialog { inset: 80px 260px 102px 259px; background: #6aacf7; border: 1px solid #4b86c8; padding: 0 7px 7px 6px; }
.dialog .win-title { padding-left: 3px; }
.dialog .win-title h2 { padding-left: 80px; }
.dialog .x { background: #c75050; }
.dlg-body { flex: 1; min-height: 0; display: flex; flex-direction: column; border: 1px solid #5794dc; background: #f0f0f0; }
.strip { height: 36px; flex: none; display: flex; justify-content: flex-end; background: #eaeaea; }
.strip button { width: 46px; border: 0; border-left: 1px solid #aaa; background: #f0f0f0; display: flex; flex-direction: column; align-items: center; gap: 1px; padding-top: 4px; }
.panel, .commit { border: 1px solid #cacaca; border-radius: 4px; background: #e9e9e9; }
.panel { height: 50px; flex: none; display: flex; gap: 10px; padding: 9px 20px 0 7px; margin-right: 1px; }
.f { display: flex; flex-direction: column; gap: 3px; text-indent: 1px; }
.dialog input { width: 100%; height: 19px; padding: 0 2px 1px; border: 1px solid #7f9db9; border-radius: 0; background: #ffffe1; text-indent: 0; }
.w1 { width: 113px; }
.w2 { width: 121px; }
.grow { flex: 1; }
.nums { display: flex; gap: 2px; }
.w3 { width: 80px; }
.nums input { text-align: right; border-color: #888; }
.commit { flex: 1; min-height: 0; min-width: 0; margin: 2px 1px 0 0; padding: 0 7px 6px 8px; display: flex; flex-direction: column; }
.commit legend { color: #00f; padding: 0 3px; }
.sums { display: flex; gap: 3px; align-items: flex-end; padding: 2px 0 9px; height: 50px; flex: none; }
.ref { width: 124px; padding: 0 5px; }
.sums label { width: 94px; text-align: right; display: flex; flex-direction: column; gap: 4px; }
.sums input { text-align: right; }
.sums .blue { background: #eaf4ff; }
.list { flex: 1; min-height: 0; background: #fff; border: 1px solid #7f9db9; }
.list table { table-layout: fixed; border-spacing: 0; width: 628px; }
.list th { height: 22px; padding: 0 3px; text-align: left; font-weight: normal; border: solid #808080; border-width: 0 1px 1px 0; background: linear-gradient(#fafafa, #bfbfbf); }
.list td { height: 22px; padding: 0 2px; background: #ffffe1; border: solid #c0c0c0; border-width: 0 1px 1px 0; }
.k1 { width: 125px; }
.k2 { width: 100px; }
.k3 { width: 73px; }
.k4 { width: 90px; }
.k5 { width: 150px; }
.list .act { background: #b5c9e9; font-weight: bold; }
.list .r { text-align: right; }
.list .cur { background: #b5c9e9; border: 1px dotted #333; }
.total { align-self: flex-start; height: 20px; flex: none; margin: 1px 0 4px 2px; padding: 0 7px 0 4px; display: flex; align-items: center; border: 1px solid #666; border-radius: 4px; font: 11px/16px "DejaVu Sans Condensed", sans-serif; }
.total b { margin-right: 24px; }
.total span { margin-right: 16px; }
.total span:last-child { margin-right: 0; }
.total strong { color: #00f; margin-left: 6px; }
.acts { display: flex; gap: 3px; flex: none; padding-left: 1px; }
.acts button { width: 107px; height: 32px; display: flex; align-items: center; justify-content: center; gap: 6px; white-space: nowrap; border: 1px solid #44587c; border-radius: 3px; background: linear-gradient(#fff, #e9f0f7 49%, #d2dfea 51%, #dfe8f3); }

/* taskbar */
.taskbar { height: 40px; flex: none; display: flex; align-items: center; gap: 3px; background: linear-gradient(#538dcc, #4b84c3); border-top: 1px solid #3b6ea6; }
.taskbar button { width: 59px; height: 39px; border: 1px solid #9bbde0; outline: 1px solid #3f6f9f; background: #6f9ecf; display: flex; align-items: center; justify-content: center; }
.taskbar button svg { width: 32px; height: 32px; }
.taskbar .start { width: 54px; margin-right: 2px; border: 0; outline: 0; background: none; }
.taskbar .start svg { width: 38px; height: 38px; }
.taskbar .stack { border-right: 4px double #8fb3da; }
.taskbar .on { background: #a4bfdd; border-color: #fff; }
.tray { margin-left: auto; display: flex; align-items: center; gap: 8px; padding-right: 26px; color: #fff; }
.tray .up { width: 8px; height: 6px; margin-right: 4px; }
.tray time { margin-left: 9px; text-align: center; font: 11px/17px "Open Sans", sans-serif; }
.caption { height: 21px; flex: none; background: #000; color: #fff; font-weight: bold; line-height: 20px; padding-left: 3px; }
```
